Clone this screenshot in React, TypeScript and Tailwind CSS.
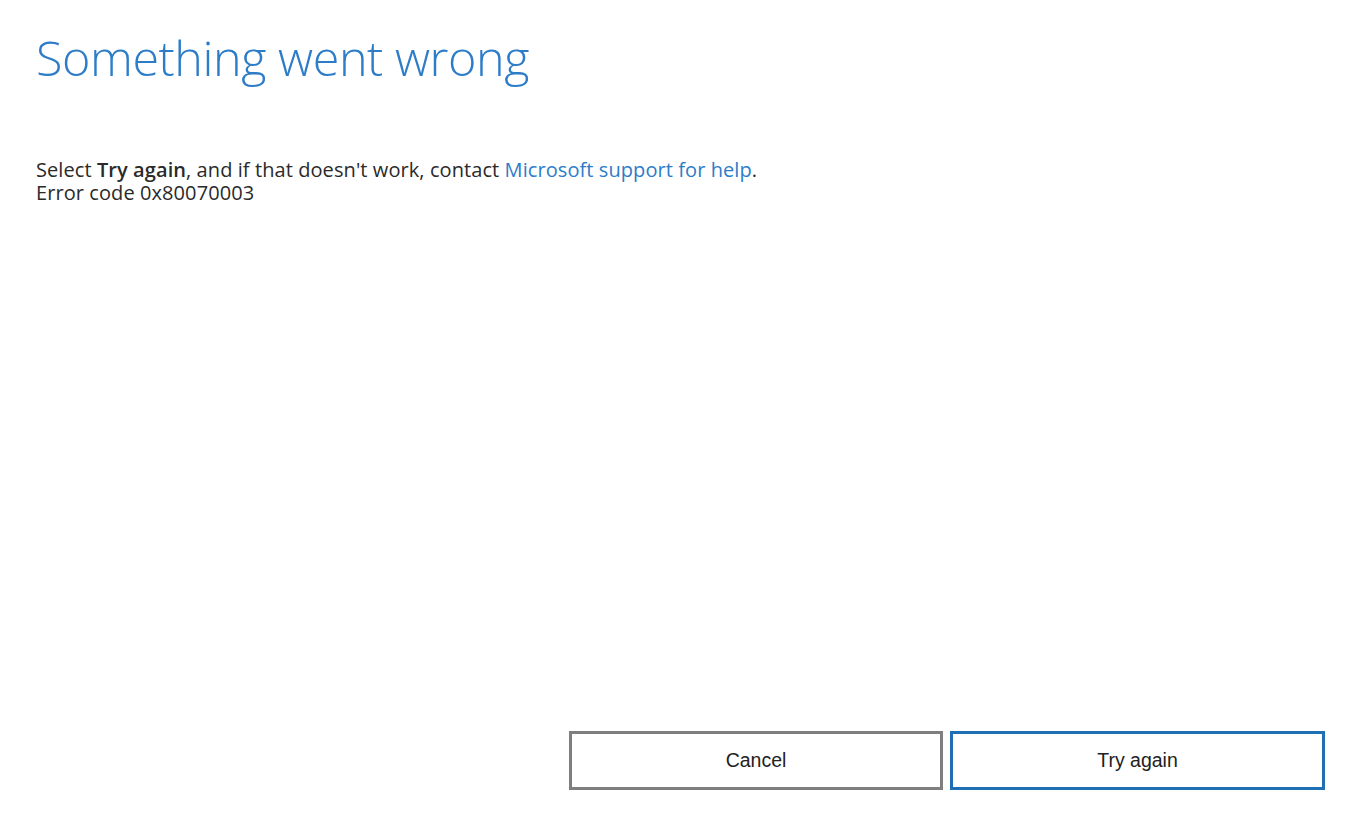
import React from 'react';

export default function App() {
  return (
    <div className="h-screen bg-white flex flex-col pl-[36px] pr-[28px] pb-[37px] font-['Open_Sans',sans-serif]">
      {/* Title */}
      <h1 className="mt-[22px] text-[48.5px] leading-[70px] font-light text-[#2d7cc8] tracking-[-0.45px]">
        Something went wrong
      </h1>

      {/* Message */}
      <div className="mt-[66px] text-[20px] leading-[23px] text-[#2a2a2a] tracking-[0.08px]">
        <p>
          Select <span className="font-semibold">Try again</span>, and if that doesn't work, contact{' '}
          <a href="#" className="text-[#2d7cc8]">Microsoft support for help</a>.
        </p>
        <p>Error code 0x80070003</p>
      </div>

      {/* Buttons */}
      <div className="mt-auto flex justify-end gap-[7px] font-['Liberation_Sans',Arial,sans-serif]">
        <button className="w-[374px] h-[59px] border-[3px] border-[#7f7f7f] bg-white text-[19.5px] text-[#222]">
          Cancel
        </button>
        <button className="w-[375px] h-[59px] border-[3px] border-[#1f6fb5] bg-white text-[19.5px] text-[#222]">
          Try again
        </button>
      </div>
    </div>
  );
}
